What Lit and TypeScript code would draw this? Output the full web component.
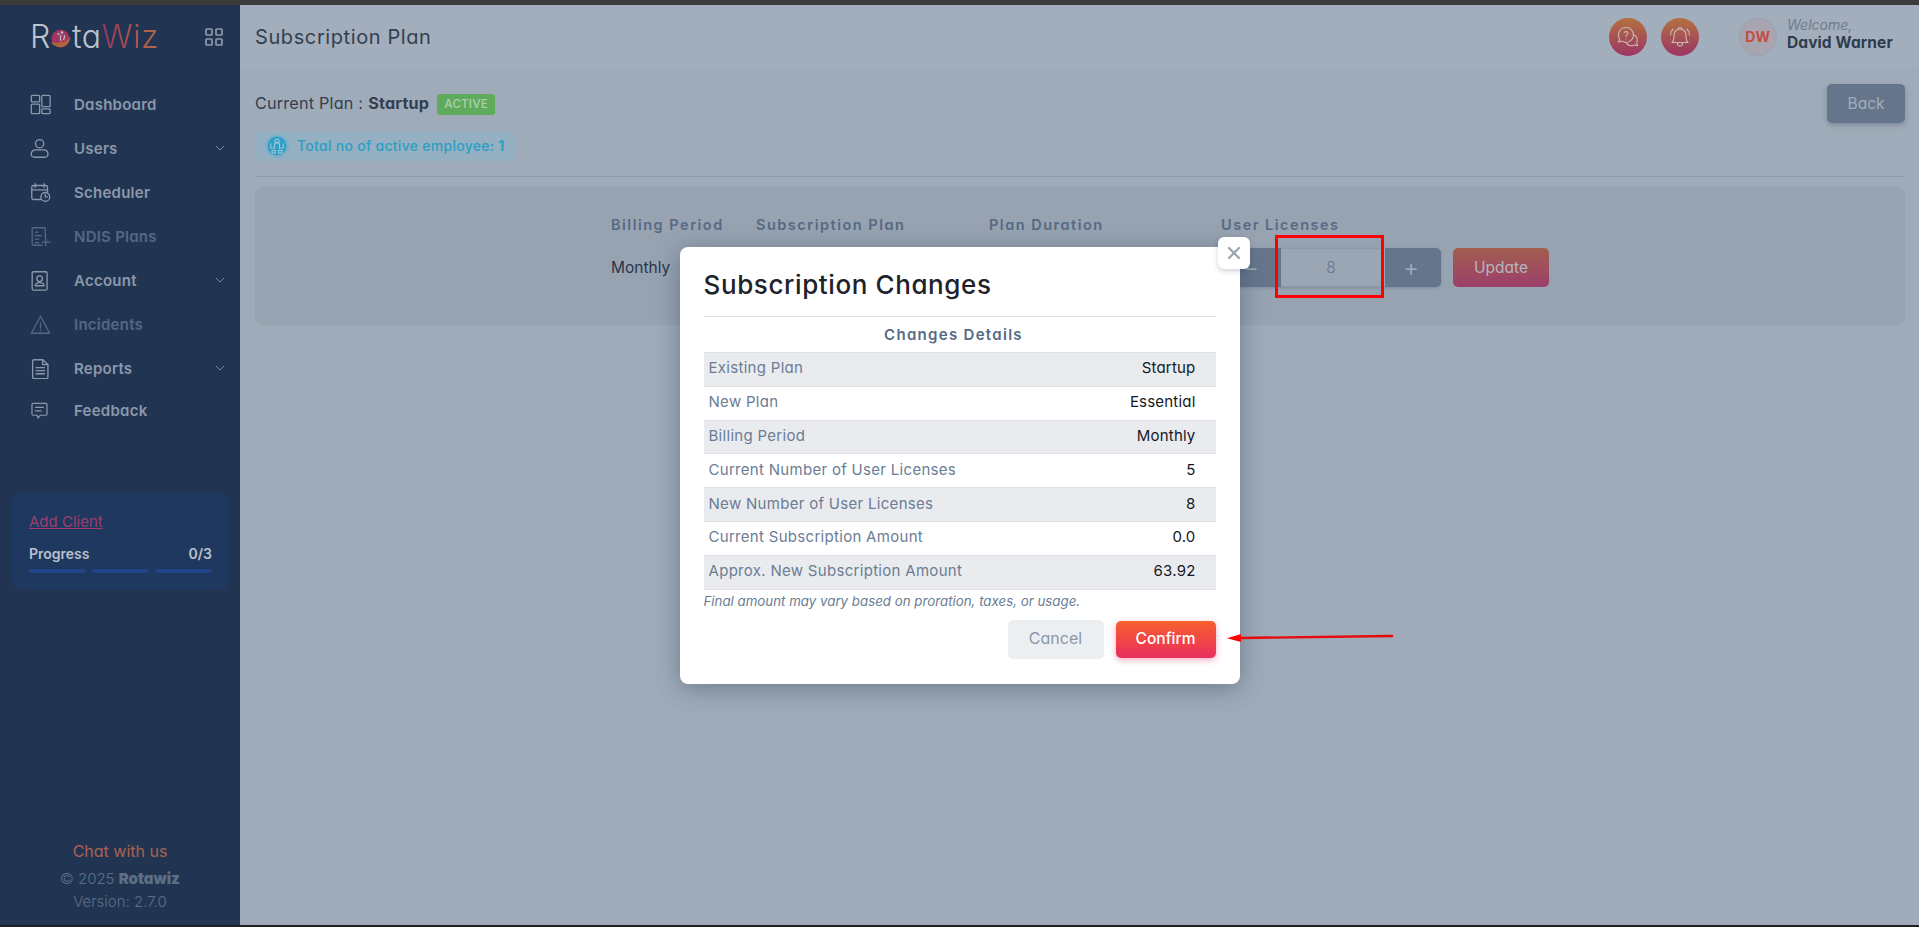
import { LitElement, html, css, svg } from "lit";
import { customElement } from "lit/decorators.js";

const stroke = (inner: unknown, size = 24, vb = "0 0 24 24") => html`<svg width=${size} height=${size} viewBox=${vb} fill="none" stroke="currentColor" stroke-width="1.5" stroke-linecap="round" stroke-linejoin="round">${inner}</svg>`;

const icons: Record<string, unknown> = {
  dashboard: svg`<rect x="1.500" y="1.500" width="9.500" height="7.500" rx="1"/><rect x="1.500" y="11.500" width="9.500" height="11" rx="1"/><rect x="13.500" y="1.500" width="9.500" height="13" rx="1"/><rect x="13.500" y="17" width="9.500" height="5.500" rx="1"/>`,
  users: svg`<circle cx="11" cy="6.500" r="4.700"/><path d="M6 13.500h10a4.500 4.500 0 0 1 4.500 4.500v.5a3.500 3.500 0 0 1-3.500 3.500H5a3.500 3.500 0 0 1-3.500-3.500V18A4.500 4.500 0 0 1 6 13.500z"/>`,
  scheduler: svg`<path d="M12 20H4a2 2 0 0 1-2-2V6a2 2 0 0 1 2-2h14a2 2 0 0 1 2 2v5"/><path d="M2 9h18"/><path d="M6 2v4M16 2v4"/><circle cx="17.500" cy="17" r="5"/><path d="M17.500 14.500V17h2.200"/>`,
  ndis: svg`<path d="M14 22H4a1.500 1.500 0 0 1-1.500-1.500v-17A1.500 1.500 0 0 1 4 2h12a1.500 1.500 0 0 1 1.500 1.500V13"/><path d="M6 7h3M6 11h7M6 15h4M6 19h4"/><path d="M18 14.500v8M14 18.500h9"/>`,
  account: svg`<rect x="2.500" y="2" width="17" height="21" rx="1.500"/><circle cx="11" cy="10" r="3.200"/><path d="M6 18c0-2.200 2-3.600 5-3.600s5 1.400 5 3.600z"/>`,
  incidents: svg`<path d="M12 2.500 1.500 22h21z"/><path d="M12 10v6M12 18.500v.5"/>`,
  reports: svg`<path d="M3 3.500A1.500 1.500 0 0 1 4.500 2h10l6 5.500v14.500a1.500 1.500 0 0 1-1.500 1.500H4.500A1.500 1.500 0 0 1 3 22z"/><path d="M14.500 2v5.500h6"/><path d="M7 11h9.500M7 14.500h9.500M7 18h9.500"/>`,
  feedback: svg`<path d="M4 3h16a1.500 1.500 0 0 1 1.500 1.500v12A1.500 1.500 0 0 1 20 18h-7l-3 3.500-1-3.500H4a1.500 1.500 0 0 1-1.500-1.500v-12A1.500 1.500 0 0 1 4 3z"/><path d="M7 8h10M7 12.500h7"/>`,
};

const nav = [
  { id: "dashboard", label: "Dashboard" },
  { id: "users", label: "Users", chev: true },
  { id: "scheduler", label: "Scheduler" },
  { id: "ndis", label: "NDIS Plans", off: true },
  { id: "account", label: "Account", chev: true },
  { id: "incidents", label: "Incidents", off: true },
  { id: "reports", label: "Reports", chev: true },
  { id: "feedback", label: "Feedback", fb: true },
];

const rows = [
  ["Existing Plan", "Startup"],
  ["New Plan", "Essential"],
  ["Billing Period", "Monthly"],
  ["Current Number of User Licenses", "5"],
  ["New Number of User Licenses", "8"],
  ["Current Subscription Amount", "0.0"],
  ["Approx. New Subscription Amount", "63.92"],
];

@customElement("app-root")
export class AppRoot extends LitElement {
  static styles = css`
    :host { display: block; width: 1919px; height: 927px; overflow: hidden; position: relative; background: #1d1f22;
      font-family: Inter, "Liberation Sans", sans-serif; font-feature-settings: "cv11" 1; color: #2d3a4b; }
    * { box-sizing: border-box; }
    .top { height: 5px; background: #3b3b3b; }
    .page { display: flex; height: 920px; }
    .side { width: 240px; flex: none; background: #213553; display: flex; flex-direction: column; }
    .brand { height: 63px; padding: 0 17px 0 30px; display: flex; align-items: center; justify-content: space-between; }
    .logo { display: flex; align-items: center; font-size: 32px; font-weight: 300; line-height: 1; letter-spacing: .6px; color: #bcc3cb; margin-top: 1px; }
    .logo svg { margin: 3px 1px 0 0; }
    .wiz { background: linear-gradient(90deg, #9c3560, #b36a45); -webkit-background-clip: text; background-clip: text; color: transparent; font-weight: 300; }
    .gridbtn { color: #8f9aa9; display: flex; }
    .nav { display: flex; flex-direction: column; padding-top: 14px; }
    .item { height: 44px; padding: 0 15px 0 30px; display: flex; align-items: center; color: #8c98aa; font-size: 15px; letter-spacing: .25px; font-weight: 600; }
    .item.off { color: #566781; }
    .item.fb { height: 40px; }
    .item .ic { width: 44px; flex: none; display: flex; color: #8c98aa; }
    .item.off .ic { color: #566781; }
    .item span.t { flex: 1; }
    .chev { color: #77859a; display: flex; }
    .prog { margin: 63px 11px 0 12px; height: 97px; background: #1f3860; border-radius: 8px; padding: 20px 17px 0; }
    .add { font-size: 15px; color: #9c3f6b; text-decoration: underline; line-height: 18px; display: block; }
    .pl { display: flex; justify-content: space-between; margin-top: 14px; font-size: 14px; font-weight: 600; color: #b9c1cc; line-height: 18px; }
    .bars { display: grid; grid-template-columns: repeat(3, 1fr); gap: 6px; margin-top: 6px; }
    .bars i { height: 4px; border-radius: 2px; background: #234585; display: block; }
    .foot { margin-top: auto; text-align: center; padding-bottom: 12px; color: #5d6e85; font-size: 15px; font-weight: 300; line-height: 23px; }
    .chat { color: #ac6150; font-size: 16px; font-weight: 400; margin-bottom: 4px; }
    .foot b { font-weight: 900; }
    .main { flex: 1; background: #9fabb8; min-width: 0; }
    .head { height: 63px; background: #a3aebc; padding: 0 26px 0 15px; display: flex; align-items: center; }
    .head h1 { margin: 0; font-size: 20px; font-weight: 400; color: #333f50; flex: 1; letter-spacing: .6px; }
    .round { width: 38px; height: 38px; border-radius: 50%; margin-left: 14px; display: flex; align-items: center; justify-content: center; color: #c9b9b8;
      background: linear-gradient(180deg, #b2713f, #9c3565); }
    .ava { width: 38px; height: 38px; border-radius: 50%; margin-left: 40px; background: #a8a5b0; border: 1px solid #96a4b2; color: #c64c42; font-weight: 700; font-size: 14px; display: flex; align-items: center; justify-content: center; letter-spacing: .5px; }
    .who { margin-left: 10px; width: 106px; white-space: nowrap; line-height: 18px; margin-top: -5px; }
    .who em { display: block; font-size: 14px; color: #6e7b8c; font-weight: 400; }
    .who b { display: block; font-size: 15.500px; font-weight: 700; letter-spacing: .1px; color: #2f3c4e; }
    .content { padding: 16px 14px 0 15px; }
    .planrow { display: flex; align-items: flex-start; }
    .plan { margin-top: 7px; font-size: 16.200px; letter-spacing: .2px; color: #333f50; display: flex; align-items: center; line-height: 24px; }
    .plan b { font-weight: 700; margin-left: 5px; }
    .badge { margin-left: 8px; margin-top: 2px; background: #5dab5b; border-radius: 3px; color: #a7cba6; font-size: 11.500px; font-weight: 600; padding: 0 7px; height: 21px; line-height: 21px; }
    .back { margin-left: auto; width: 78px; height: 39px; border-radius: 5px; background: #65768c; color: #a3aebc; display: flex; align-items: center; justify-content: center; font-size: 15.500px; box-shadow: 0 2px 5px rgba(60,75,95,.35); }
    .chip { margin-top: 8px; width: 260px; height: 30px; border-radius: 5px; background: #95b0c2; display: flex; align-items: center; padding-left: 10px; color: #2b9fc4; font-size: 14px; letter-spacing: .28px; font-weight: 500; line-height: 28px; padding-bottom: 1px; }
    .chip .dot { width: 24px; height: 24px; flex: none; margin-right: 8px; display: flex; }
    .chip b { font-weight: 700; margin-left: 4px; }
    hr { border: 0; height: 1px; margin: 0; background: #8e9bab; }
    .content > hr { margin-top: 15px; }
    .card { margin-top: 10px; height: 138px; background: #97a3b1; border-radius: 8px; display: flex; justify-content: center; padding-top: 28px; }
    .col { display: flex; flex-direction: column; }
    .col.a { width: 145px; } .col.b { width: 233px; } .col.c { width: 232px; } .col.d { width: 328px; }
    .lbl { font-size: 14.500px; font-weight: 600; letter-spacing: 1.500px; color: #566a85; line-height: 20px; white-space: nowrap; }
    .val { margin-top: 23px; font-size: 15.500px; color: #28364a; line-height: 20px; }
    .lic { display: flex; margin-top: 13px; height: 39px; }
    .step { display: flex; width: 220px; height: 39px; background: #65768c; border-radius: 5px; color: #a3aebc; overflow: hidden; box-shadow: 0 1px 3px rgba(60,75,95,.25); }
    .step span { display: flex; align-items: center; justify-content: center; font-size: 24px; font-weight: 300; }
    .step .m { width: 60px; } .step .n { flex: 1; background: #9aa6b4; color: #65768c; font-size: 15.500px; border: 1px solid #8d9aa9; border-width: 1px 0; padding-right: 4px; } .step .p { width: 56px; padding-right: 4px; }
    .upd { margin-left: 12px; width: 96px; height: 39px; border-radius: 5px; background: linear-gradient(180deg, #a25e4e, #9c3f6b); color: #b5b5bf; display: flex; align-items: center; justify-content: center; font-size: 15.500px; padding-bottom: 1px; }
    .layer { position: absolute; inset: 5px 0 2px 0; display: flex; justify-content: center; align-items: flex-start; padding-top: 242px; }
    .modal { position: relative; width: 560px; height: 437px; background: #fff; border-radius: 8px; padding: 21px 24px 0; box-shadow: 0 4px 24px rgba(50,65,90,.45); }
    .close { position: absolute; right: -10px; top: -10px; width: 32px; height: 32px; background: #fff; border-radius: 6px; color: #9aa5b3; display: flex; align-items: center; justify-content: center; box-shadow: 0 2px 5px rgba(60,75,95,.25); }
    .modal h2 { margin: 0; font-size: 26px; font-weight: 500; letter-spacing: .6px; color: #1e222a; line-height: 34px; }
    .modal hr { margin-top: 14px; background: #dbe0e6; }
    .cap { text-align: center; font-size: 15px; font-weight: 600; letter-spacing: 1.300px; color: #566a85; line-height: 35px; padding-right: 12px; }
    table { width: 100%; border-collapse: collapse; font-size: 15px; border-top: 1px solid #dfe2e7; }
    tr { height: 33.800px; border-bottom: 1px solid #dfe2e7; }
    tr:nth-child(odd) { background: #e9ebef; }
    td { padding: 0 0 2px 5px; color: #6b7d94; letter-spacing: .3px; line-height: 20px; }
    td:last-child { text-align: right; color: #14181f; padding: 0 20px 2px 0; letter-spacing: .2px; }
    .note { font-size: 13.300px; font-style: italic; color: #6b7d94; line-height: 22px; }
    .acts { display: flex; justify-content: flex-end; gap: 12px; margin-top: 8px; }
    .btn { height: 39px; border-radius: 5px; display: flex; align-items: center; justify-content: center; font-size: 16px; padding-bottom: 2px; }
    .cancel { width: 96px; background: #eceff2; color: #8b97a7; }
    .ok { width: 100px; height: 37px; margin-top: 1px; font-size: 15.500px; background: linear-gradient(180deg, #f6602d, #e92e5d); color: #fff; font-weight: 500; box-shadow: 0 2px 6px rgba(233,46,93,.4); }
    .mark { position: absolute; left: 1275px; top: 235px; width: 109px; height: 63px; border: 3px solid #f00; }
    .arrow { position: absolute; left: 1225px; top: 630px; }
  `;

  render() {
    return html`
      <div class="top"></div>
      <div class="page">
        <aside class="side">
          <div class="brand">
            <div class="logo">R<svg width="20" height="20" viewBox="0 0 20 20"><defs><linearGradient id="lg" x1="0" y1="0" x2="1" y2="1"><stop offset="0" stop-color="#9c3560"/><stop offset=".6" stop-color="#a33561"/><stop offset="1" stop-color="#b0653f"/></linearGradient></defs><circle cx="9.500" cy="9.500" r="9" fill="url(#lg)"/><path d="M0 13c3 5 11 7 15 3 3-2 4-5 5-9-2 4-5 6-9 6-4 1-8 1-11 0z" fill="#b0653f"/><circle cx="11" cy="3.500" r="1.300" fill="#bcc3cb"/><path d="M10 6c-1 2-1 4 0 6M13.500 6c0 2 0 3-1 5" stroke="#bcc3cb" stroke-width="1.200" fill="none"/><circle cx="7.500" cy="5" r="1" fill="#bcc3cb"/></svg>ta<span class="wiz">Wiz</span></div>
            <span class="gridbtn"><svg width="18" height="18" viewBox="0 0 18 18" fill="none" stroke="currentColor" stroke-width="1.700"><rect x="1" y="1" width="6" height="6" rx=".8"/><rect x="11" y="1" width="6" height="6" rx=".8"/><rect x="1" y="11" width="6" height="6" rx=".8"/><rect x="11" y="11" width="6" height="6" rx=".8"/></svg></span>
          </div>
          <nav class="nav">
            ${nav.map((n) => html`<div class="item ${n.off ? "off" : ""} ${n.fb ? "fb" : ""}">
              <span class="ic">${stroke(icons[n.id], n.fb ? 19 : 21)}</span><span class="t">${n.label}</span>
              ${n.chev ? html`<span class="chev"><svg width="10" height="10" viewBox="0 0 10 10" fill="none" stroke="currentColor" stroke-width="1"><path d="M1 3l4 4 4-4"/></svg></span>` : ""}
            </div>`)}
          </nav>
          <div class="prog">
            <a class="add">Add Client</a>
            <div class="pl"><span>Progress</span><span>0/3</span></div>
            <div class="bars"><i></i><i></i><i></i></div>
          </div>
          <div class="foot">
            <div class="chat">Chat with us</div>
            <div>© 2025 <b>Rotawiz</b></div>
            <div>Version: 2.7.0</div>
          </div>
        </aside>
        <main class="main">
          <header class="head">
            <h1>Subscription Plan</h1>
            <span class="round"><svg width="24" height="24" viewBox="0 0 24 24" fill="none" stroke="currentColor" stroke-width="1.100" stroke-linecap="round" stroke-linejoin="round"><path d="M10 2.500a7.500 7.500 0 0 0-6.500 11.200L2.500 17l3.500-.9A7.500 7.500 0 0 0 17.500 10 7.500 7.500 0 0 0 10 2.500z"/><path d="M8 8c.3-1.800 4-2 4 .2 0 1.500-2 1.500-2 3.300M10 14v.1"/><path d="M17.400 9.500a6 6 0 0 1 3.300 8.200l.8 3-3.100-.8a6 6 0 0 1-8.200-2"/></svg></span>
            <span class="round"><svg width="24" height="24" viewBox="0 0 24 24" fill="none" stroke="currentColor" stroke-width="1.100" stroke-linecap="round" stroke-linejoin="round"><path d="M12 4a6 6 0 0 0-6 6v3c0 2-1 3.500-2 4.500h16c-1-1-2-2.500-2-4.500v-3a6 6 0 0 0-6-6z"/><path d="M10 4.500a2 2 0 0 1 4 0M9.500 17.500v1a2.500 2.500 0 0 0 5 0v-1"/><path d="M2.500 10c0-2.500 1-4.500 2.500-6M21.500 10c0-2.500-1-4.500-2.500-6"/></svg></span>
            <span class="ava">DW</span>
            <div class="who"><em>Welcome,</em><b>David Warner</b></div>
          </header>
          <section class="content">
            <div class="planrow">
              <div class="plan">Current Plan : <b>Startup</b><span class="badge">ACTIVE</span></div>
              <span class="back">Back</span>
            </div>
            <div class="chip"><span class="dot"><svg width="24" height="24" viewBox="0 0 24 24"><circle cx="12" cy="12" r="12" fill="#7fb0c8"/><circle cx="12" cy="12" r="9.500" fill="#2f9fc6"/><g fill="none" stroke="#9cc6d8" stroke-width="1.100"><circle cx="12" cy="7" r="2"/><path d="M9.500 15v-4a2.500 2.500 0 0 1 5 0v4M5.800 9.500v4.500h3M18.200 9.500v4.500h-3"/><rect x="7" y="16.500" width="3.500" height="2.500"/><rect x="13.500" y="16.500" width="3.500" height="2.500"/></g></svg></span>Total no of active employee:<b>1</b></div>
            <hr />
            <div class="card">
              <div class="col a"><span class="lbl">Billing Period</span><span class="val">Monthly</span></div>
              <div class="col b"><span class="lbl">Subscription Plan</span></div>
              <div class="col c"><span class="lbl">Plan Duration</span></div>
              <div class="col d"><span class="lbl">User Licenses</span>
                <div class="lic"><div class="step"><span class="m">−</span><span class="n">8</span><span class="p">+</span></div><span class="upd">Update</span></div>
              </div>
            </div>
          </section>
        </main>
      </div>
      <div class="layer">
        <div class="modal">
          <span class="close"><svg width="14" height="14" viewBox="0 0 14 14" stroke="currentColor" stroke-width="2.200" stroke-linecap="round"><path d="M2 2l10 10M12 2 2 12"/></svg></span>
          <h2>Subscription Changes</h2>
          <hr />
          <div class="cap">Changes Details</div>
          <table><tbody>${rows.map((r) => html`<tr><td>${r[0]}</td><td>${r[1]}</td></tr>`)}</tbody></table>
          <div class="note">Final amount may vary based on proration, taxes, or usage.</div>
          <div class="acts"><span class="btn cancel">Cancel</span><span class="btn ok">Confirm</span></div>
        </div>
      </div>
      <div class="mark"></div>
      <svg class="arrow" width="170" height="14" viewBox="0 0 170 14"><path d="M14 8 167 6" stroke="#e60a0a" stroke-width="2.400" stroke-linecap="round"/><path d="M2 8.300 16 4v8z" fill="#f00"/></svg>
    `;
  }
}
